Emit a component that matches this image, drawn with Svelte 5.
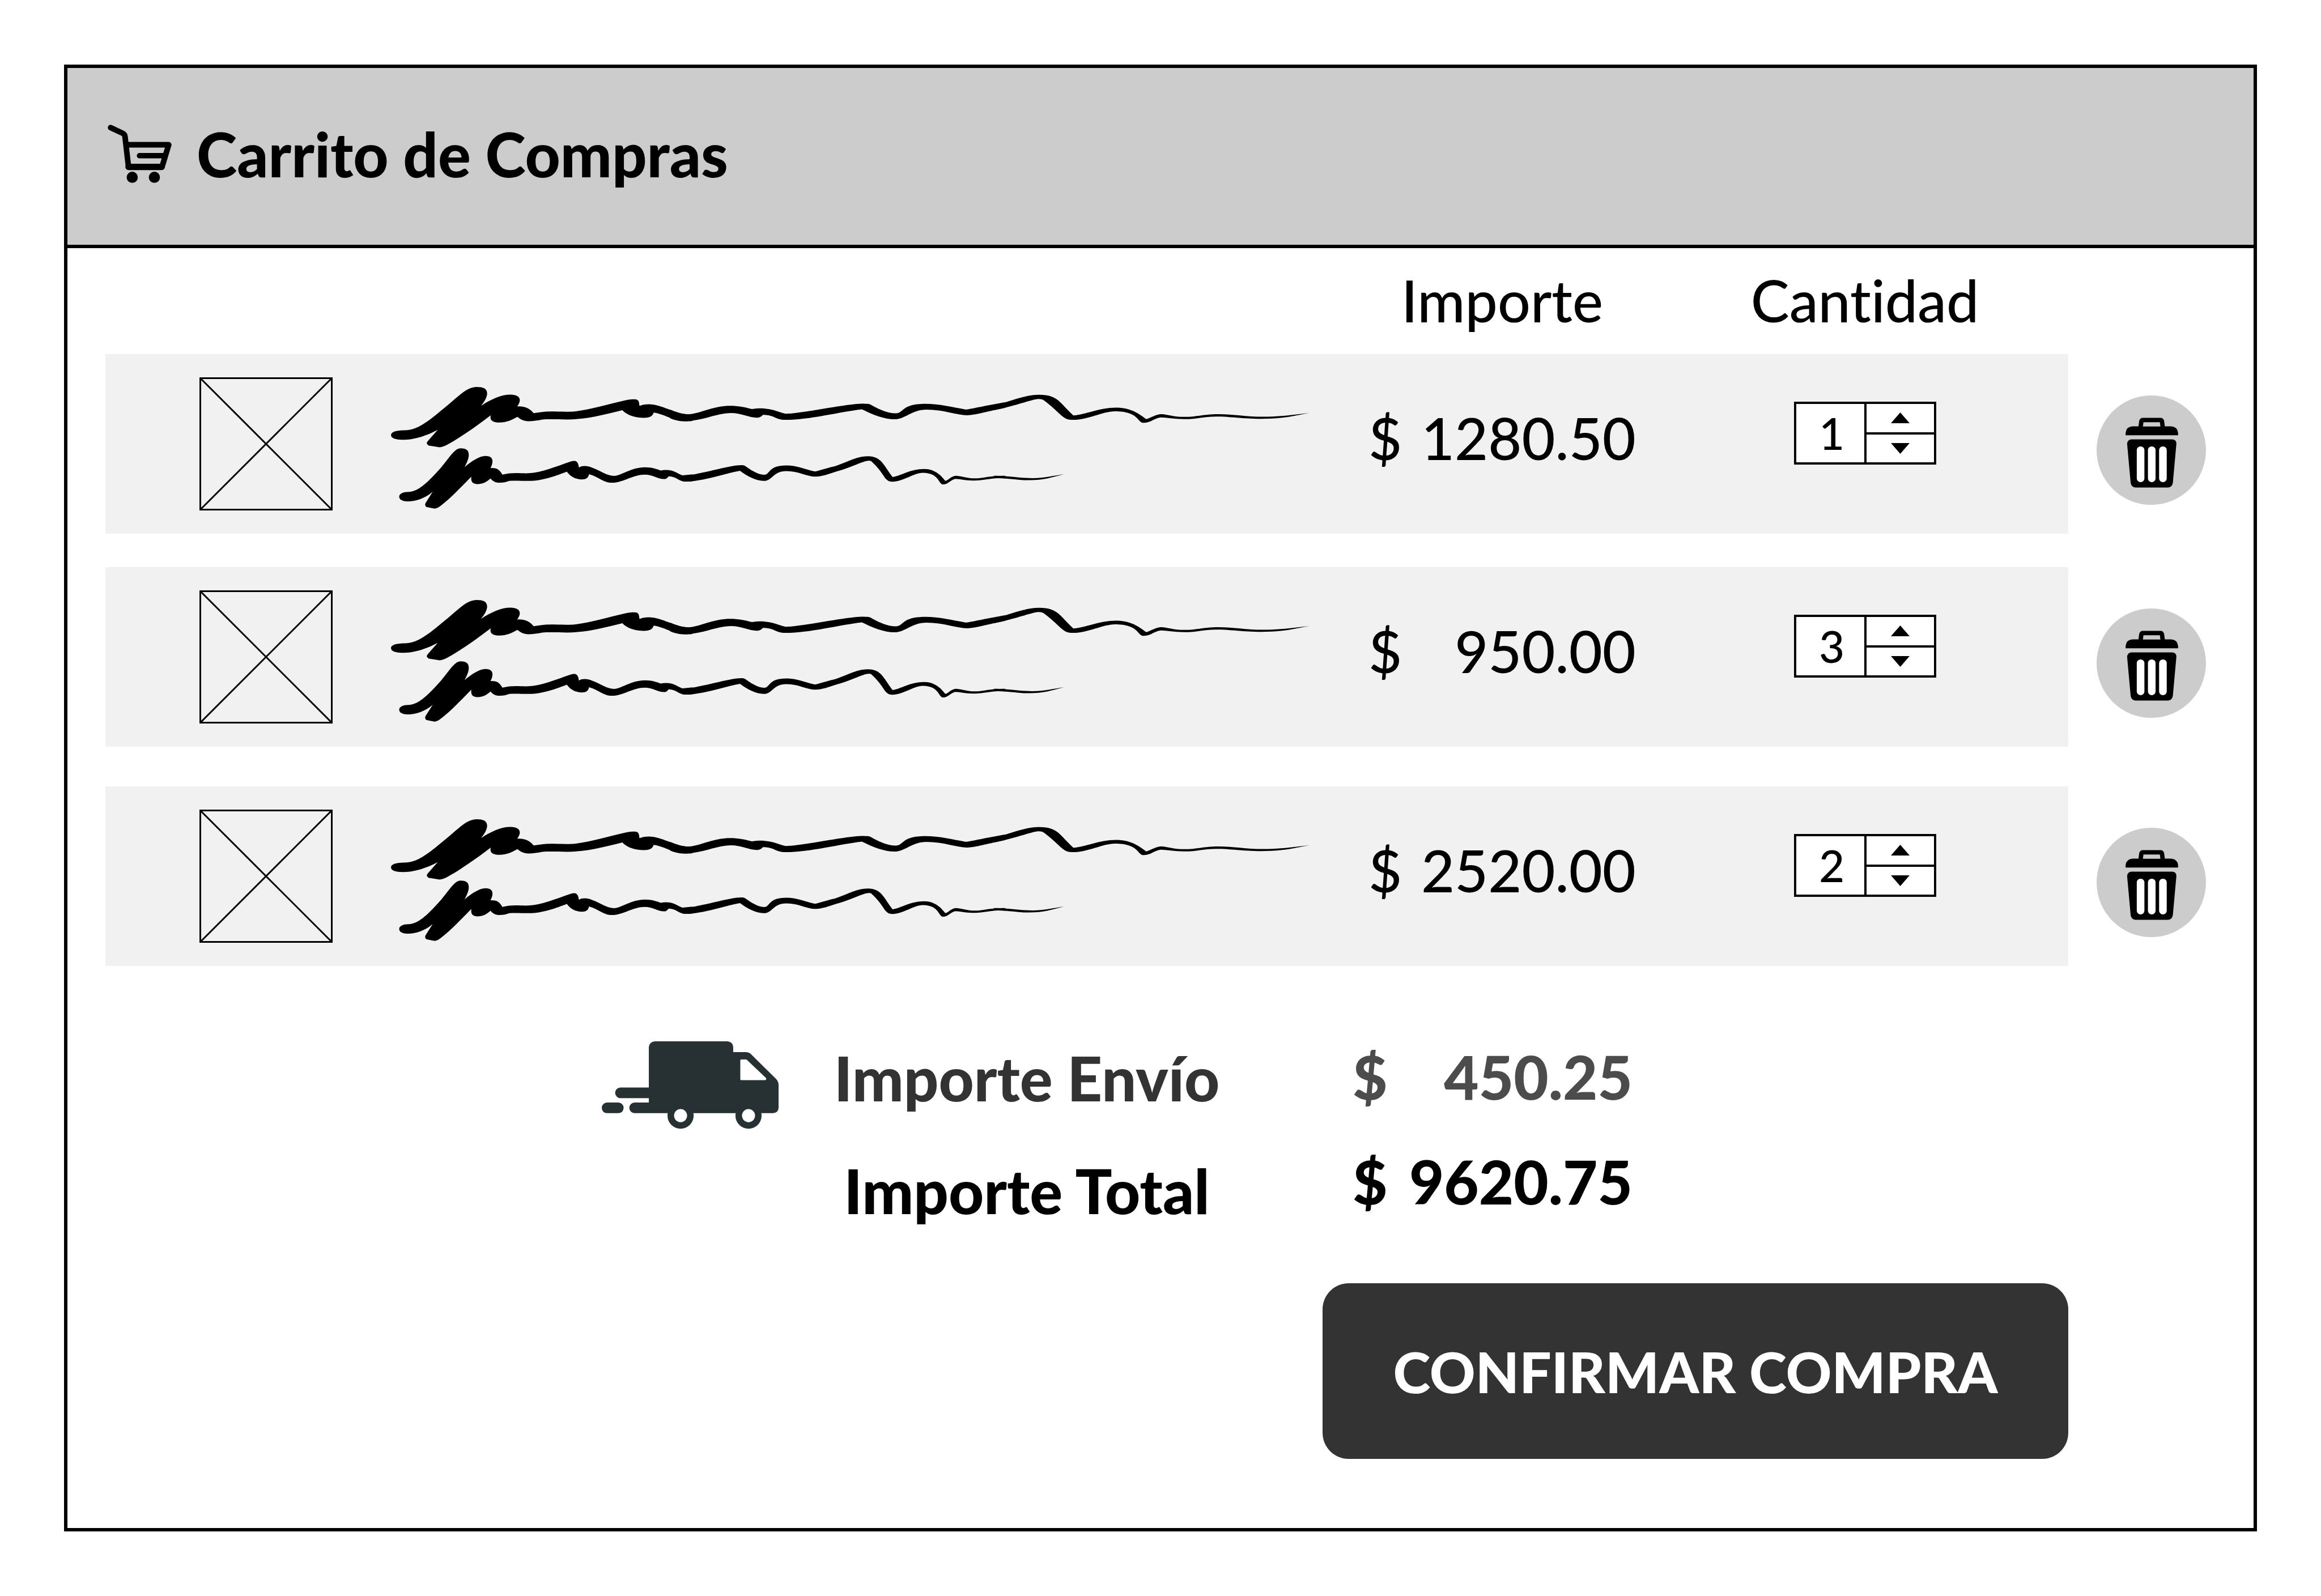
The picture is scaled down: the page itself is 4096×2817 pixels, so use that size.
<script>
  let items = $state([
    { id: 1, price: '1280.50', qty: 1 },
    { id: 2, price: '950.00', qty: 3 },
    { id: 3, price: '2520.00', qty: 2 }
  ]);
</script>

<main class="frame">
  <header class="bar">
    <svg class="cart" viewBox="38 60 344 318" aria-hidden="true">
      <path
        d="M54 79 L118 109 Q130 115 131 126 L150 290 H330 L366 171 H142"
        fill="none" stroke="#000" stroke-width="30" stroke-linecap="round" stroke-linejoin="round" />
      <path d="M209 230 H335 M150 290 H330" fill="none" stroke="#000" stroke-width="29" stroke-linecap="round" />
      <path d="M150 290 H328" stroke="#000" stroke-width="34" stroke-linecap="round" />
      <circle cx="170" cy="346" r="30" />
      <circle cx="289" cy="346" r="30" />
    </svg>
    <h1>Carrito de Compras</h1>
  </header>

  <table class="items">
    <thead>
      <tr>
        <td></td>
        <td></td>
        <th scope="col">Importe</th>
        <th scope="col">Cantidad</th>
        <td></td>
      </tr>
    </thead>
    <tbody>
      {#each items as item (item.id)}
        <tr>
          <td class="cell photo">
            <svg class="thumb" viewBox="0 0 235 235" role="img" aria-label="Imagen del producto">
              <path d="M1.5 1.5 H233.5 V233.5 H1.5 Z M1.5 1.5 L233.5 233.5 M233.5 1.5 L1.5 233.5" />
            </svg>
          </td>
          <td class="cell name">
            <svg class="scribble" viewBox="700 690 1645 222" role="img" aria-label="Descripción del producto">
              <g transform="translate(680 670) scale(0.35714 0.33333)">
                <path d="M56 325 C56 305 90 299 125 299 C200 299 270 225 350 155 C400 110 440 66 485 66 C520 66 538 75 538 102 C538 120 525 145 508 167 C560 130 610 107 655 107 C685 107 702 118 702 138 C702 150 695 160 689 171 C730 168 755 185 771 207 C800 203 825 198 855 198 C890 198 920 200 950 199 C1030 197 1120 165 1235 137 C1250 133 1265 132 1278 132 C1298 132 1300 145 1302 168 C1325 157 1365 155 1400 168 C1450 183 1500 213 1545 213 L1568 212 L1568 249 C1545 252 1500 255 1450 230 C1420 217 1400 208 1373 204 C1368 225 1350 232 1325 232 C1285 232 1240 220 1216 191 C1140 210 1050 240 940 241 C890 241 850 238 815 241 C790 246 770 250 745 250 C720 250 705 240 690 227 C660 245 635 257 600 257 C565 257 550 245 556 218 C480 280 400 340 345 372 C330 382 315 389 300 390 L245 381 Q236 375 235 368 Q236 362 242 355 L290 297 C230 330 170 350 115 350 C80 350 56 342 56 325 Z" />
                <path d="M97 656 C97 638 120 629 145 630 C200 630 260 555 310 495 C350 445 375 396 405 396 C435 396 446 408 446 432 C446 455 432 480 425 497 C460 465 500 437 530 437 C555 437 565 450 565 465 C565 480 560 490 555 502 C590 500 603 515 614 537 C640 531 660 529 680 529 C705 529 725 531 745 530 C810 527 880 495 960 466 C985 458 995 468 998 499 C1015 487 1045 490 1065 500 C1110 518 1140 544 1175 544 C1210 544 1260 498 1330 498 C1365 498 1385 507 1408 515 C1440 508 1470 515 1490 527 Q1510 538 1518 541 L1568 536 L1568 573 C1545 575 1520 577 1505 568 C1485 555 1475 548 1448 546 C1440 557 1435 561 1425 561 C1395 561 1370 537 1328 537 C1270 537 1220 580 1165 581 C1120 581 1100 550 1049 535 C1045 555 1035 563 1012 563 C985 563 955 548 938 521 C890 540 820 571 745 571 C710 571 680 568 650 571 C635 577 620 581 600 581 C578 581 567 573 555 558 C535 578 515 588 490 588 C465 588 455 575 459 548 C420 590 350 670 310 700 C300 710 285 719 275 720 L233 711 Q227 705 227 697 Q228 691 232 685 L265 629 C225 665 180 681 140 681 C115 681 97 672 97 656 Z" />
              </g>
              <g transform="translate(1200 670) scale(0.38265 0.33333)">
                <path d="M0 188 C30 202 55 213 85 213 C130 213 200 167 280 167 C320 167 350 175 383 185 C430 175 470 185 500 196 Q525 205 540 210 C600 210 780 168 860 159 C890 155 910 155 925 157 C935 158 940 163 950 169 C985 190 1020 208 1055 208 C1095 208 1080 157 1195 157 C1260 157 1320 175 1382 187 C1400 187 1500 160 1568 148 L1568 178 C1500 193 1430 217 1390 218 C1340 218 1280 188 1200 188 C1130 188 1100 240 1050 240 C1000 240 940 212 898 186 C800 198 650 243 540 243 C490 243 490 216 434 216 C425 228 415 231 405 231 C370 231 330 206 285 206 C220 206 150 250 65 250 C40 250 20 244 0 234 Z" />
                <path d="M60 541 L75 541 C110 541 240 500 310 488 C330 485 345 486 350 490 C375 510 410 538 440 538 C470 538 455 488 545 488 C590 488 630 508 675 520 C690 519 720 505 770 492 C820 475 870 438 925 438 C990 438 1000 490 1041 550 C1080 545 1120 507 1190 507 C1240 507 1270 545 1288 571 C1305 565 1315 543 1340 543 C1365 545 1390 557 1425 557 C1465 557 1490 543 1568 543 L1568 556 C1500 553 1475 569 1420 569 C1375 569 1360 560 1335 560 C1315 563 1300 590 1278 590 C1255 590 1260 527 1182 527 C1140 527 1090 575 1040 575 C1000 575 1005 530 940 464 C910 455 860 495 780 520 C740 535 710 548 680 548 C640 548 600 518 545 518 C480 518 480 571 437 571 C400 571 360 545 327 517 C260 530 150 574 75 574 L60 574 Z" />
              </g>
              <g transform="translate(1780 670) scale(0.38265 0.33333)">
                <path d="M0 163 C70 148 140 108 212 108 C300 108 310 155 371 219 C430 215 490 177 570 177 C640 177 680 210 712 239 C735 233 755 212 785 212 C810 213 840 227 890 227 C950 227 980 212 1050 212 C1120 212 1180 226 1260 226 C1350 226 1420 212 1478 205 C1400 222 1350 237 1250 237 C1160 237 1110 225 1040 225 C980 225 950 239 890 239 C840 239 810 230 780 230 C755 233 730 259 700 259 C670 259 680 197 565 197 C510 197 440 243 370 243 C320 243 325 220 235 139 C200 115 170 150 0 191 Z" />
                <path d="M0 543 C70 543 110 556 180 556 C230 556 280 543 328 534 C270 553 230 566 165 567 C110 567 70 556 0 556 Z" />
              </g>
            </svg>
          </td>
          <td class="cell price">
            <div class="money"><span>$</span><span>{item.price}</span></div>
          </td>
          <td class="cell quantity">
            <div class="stepper">
              <input type="text" inputmode="numeric" aria-label="Cantidad" bind:value={item.qty} />
              <div class="arrows">
                <button type="button" aria-label="Aumentar cantidad" onclick={() => item.qty++}>
                  <svg viewBox="0 0 33 19"><path d="M16.5 0 L33 19 H0 Z" /></svg>
                </button>
                <button type="button" aria-label="Disminuir cantidad" onclick={() => item.qty--}>
                  <svg viewBox="0 0 33 19"><path d="M0 0 H33 L16.5 19 Z" /></svg>
                </button>
              </div>
            </div>
          </td>
          <td class="remove">
            <button type="button" class="trash" aria-label="Eliminar producto">
              <svg viewBox="162 143 588 588">
                <path fill-rule="evenodd" d="M318 357 V345 Q321 311 355 309 H387 L391 280 Q394 263 411 263 H505 Q522 263 525 280 L529 309 H563 Q597 311 600 345 V357 Z M414 287 L411 310 H505 L502 287 Z" />
                <path d="M348 379 H570 Q591 381 591 402 L572 612 Q569 636 546 638 H371 Q348 636 345 612 L326 402 Q328 381 348 379 Z" />
                <g fill="#fff">
                  <rect x="378" y="417" width="41" height="192" rx="20" />
                  <rect x="438" y="417" width="41" height="192" rx="20" />
                  <rect x="498" y="417" width="41" height="192" rx="20" />
                </g>
              </svg>
            </button>
          </td>
        </tr>
      {/each}
    </tbody>
  </table>

  <section class="summary">
    <svg class="truck" viewBox="54 74 947 469" aria-hidden="true">
      <g fill="#273033">
        <rect x="54" y="402" width="117" height="57" rx="28" />
        <path d="M306 321 H154 A28 28 0 0 0 154 378 H306 V402 H230 A28 28 0 0 0 230 459 H970 Q1001 456 1001 428 V308 Q1001 290 988 276 L856 145 Q844 133 828 132 H758 V105 Q756 76 727 74 H338 Q309 76 306 105 Z" />
        <circle cx="476" cy="472" r="70" />
        <circle cx="840" cy="472" r="70" />
      </g>
      <g fill="#fff">
        <circle cx="476" cy="472" r="35" />
        <circle cx="840" cy="472" r="35" />
        <path d="M801 171 H829 L933 270 Q938 281 929 282 H801 Q796 282 796 277 V176 Q796 171 801 171 Z" />
      </g>
    </svg>
    <div class="labels">
      <span class="shipping">Importe Envío</span>
      <span>Importe Total</span>
    </div>
    <div class="amounts">
      <div class="money fee"><span>$</span><span>450.25</span></div>
      <div class="money"><span>$</span><span>9620.75</span></div>
    </div>
  </section>

  <div class="actions">
    <button type="button" class="confirm">CONFIRMAR COMPRA</button>
  </div>
</main>

<style>
  :global(body) {
    background: #fff;
  }

  .frame {
    box-sizing: border-box;
    min-height: calc(100vh - 228px);
    margin: 114px 113px;
    border: 6px solid #000;
    background: #fff;
    color: #000;
    font: 500 102px/120px Lato, 'Open Sans', sans-serif;
    font-variant-ligatures: none;
  }

  svg {
    display: block;
  }

  button {
    padding: 0;
    border: 0;
    color: inherit;
    font: inherit;
    cursor: pointer;
  }

  .bar {
    display: flex;
    align-items: center;
    gap: 44px;
    height: 312px;
    padding-left: 71px;
    border-bottom: 6px solid #000;
    background: #ccc;
  }

  .cart {
    width: 113px;
    margin-bottom: 10px;
  }

  h1 {
    margin: 0 0 10px;
    font-size: 108px;
    font-weight: 900;
  }

  .items {
    display: block;
    padding-left: 67px;
  }

  thead,
  tbody {
    display: block;
  }

  tr {
    display: grid;
    grid-template-columns: 504fr 1680fr 562fr 718fr 327fr;
  }

  tbody tr {
    margin-bottom: 59px;
  }

  tbody tr:nth-child(2) {
    margin-bottom: 70px;
  }

  tbody tr:last-child {
    margin-bottom: 0;
  }

  td,
  th {
    padding: 0;
  }

  th {
    padding: 32px 0 35px;
    font-weight: 500;
    text-align: center;
  }

  .cell {
    display: flex;
    align-items: center;
    justify-content: center;
    box-sizing: border-box;
    height: 317px;
    background: #f1f1f1;
  }

  .photo {
    justify-content: flex-start;
    padding-left: 166px;
  }

  .thumb {
    width: 235px;
    fill: none;
    stroke: #000;
    stroke-width: 3;
  }

  .name {
    justify-content: flex-start;
    padding-top: 14px;
  }

  .scribble {
    width: 1621px;
  }

  .money {
    display: flex;
    justify-content: space-between;
    width: 472px;
  }

  .price {
    align-items: flex-start;
    padding-top: 88px;
  }

  .quantity {
    align-items: flex-start;
    padding-top: 84px;
  }

  .stepper {
    box-sizing: border-box;
    display: flex;
    width: 251px;
    height: 111px;
    border: 4px solid #000;
    background: #fff;
  }

  .stepper input {
    box-sizing: border-box;
    width: 120px;
    padding: 0 0 0 6px;
    border: 0;
    background: none;
    font: 500 78px/103px Lato, sans-serif;
    text-align: center;
    color: #000;
  }

  .arrows {
    flex: 1;
    display: flex;
    flex-direction: column;
    border-left: 4px solid #000;
  }

  .arrows button {
    flex: 1;
    display: grid;
    place-items: center;
    background: none;
  }

  .arrows button + button {
    border-top: 4px solid #000;
  }

  .arrows svg {
    width: 33px;
  }

  .remove {
    padding: 73px 0 0 50px;
  }

  .trash {
    width: 193px;
    height: 193px;
    border-radius: 50%;
    background: #ccc;
  }

  .summary {
    display: flex;
    align-items: flex-start;
    padding: 133px 0 0 943px;
    font-size: 108px;
    font-weight: 900;
  }

  .truck {
    width: 312px;
  }

  .labels {
    display: flex;
    flex-direction: column;
    align-items: center;
    gap: 79px;
    width: 876px;
    padding-top: 4px;
  }

  .shipping {
    color: #333;
  }

  .amounts {
    display: flex;
    flex-direction: column;
    gap: 65px;
    margin-left: 137px;
    padding-top: 2px;
  }

  .amounts .money {
    width: 494px;
    font-size: 106px;
  }

  .fee {
    color: #4c4c4c;
  }

  .actions {
    display: flex;
    justify-content: flex-end;
    padding: 104px 327px 121px 0;
  }

  .confirm {
    width: 1316px;
    height: 310px;
    border-radius: 46px;
    background: #333;
    color: #fff;
    font-size: 100px;
    font-weight: 900;
  }
</style>
